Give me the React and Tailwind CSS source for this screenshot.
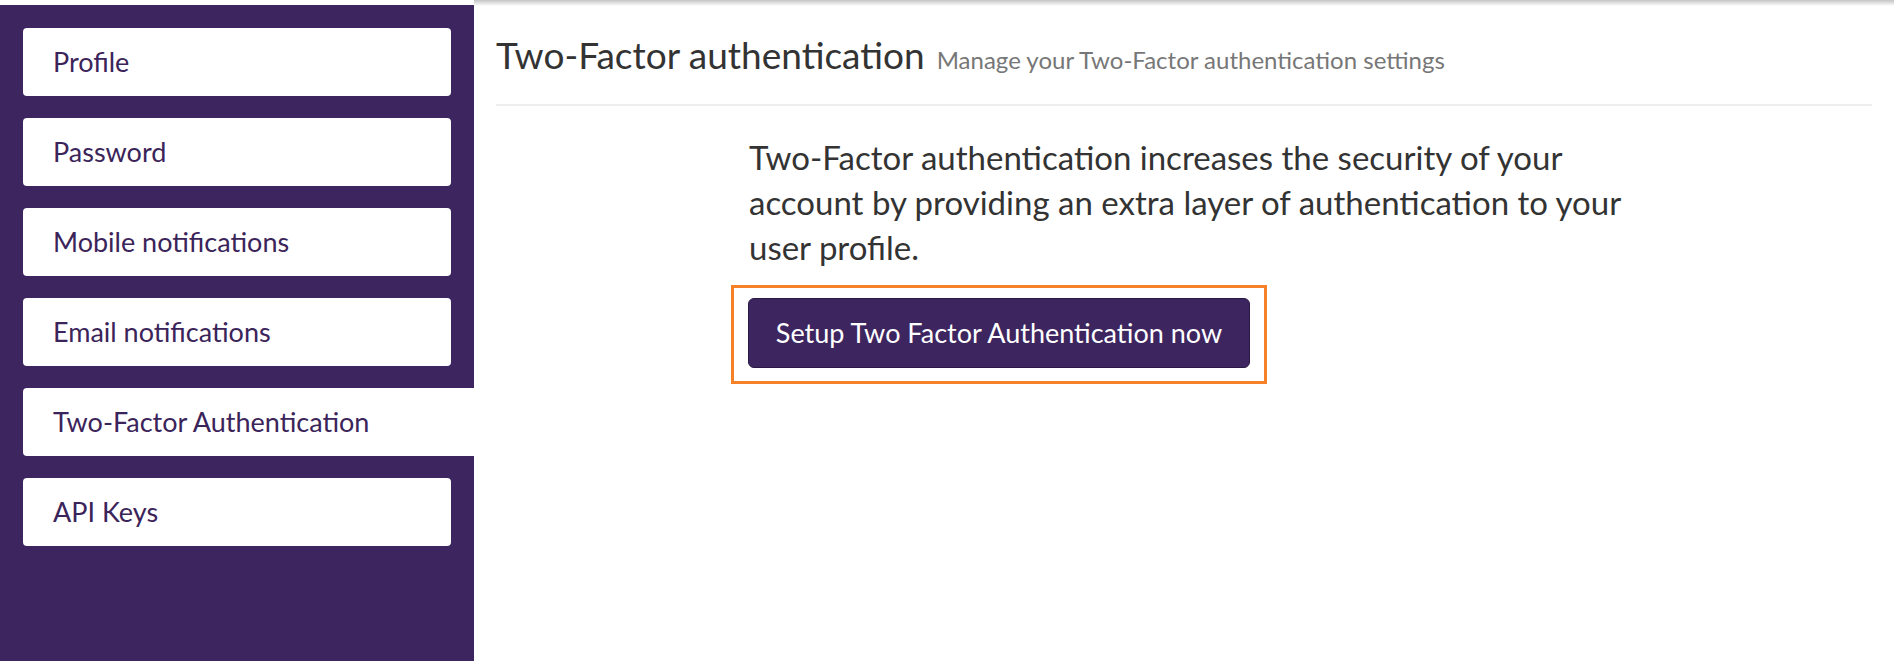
import { useState } from "react";

const menuItems = [
  "Profile",
  "Password",
  "Mobile notifications",
  "Email notifications",
  "Two-Factor Authentication",
  "API Keys",
];

const SideMenu = ({ active, onSelect }) => {
  return (
    <aside className="w-[474px] shrink-0 flex flex-col">
      {/* white strip above the purple column */}
      <div className="h-[5px] bg-white" />
      <nav className="flex-1 bg-[#3d2560] pt-[23px] pl-[23px] flex flex-col gap-[22px]">
        {menuItems.map((item) => {
          const isActive = item === active;
          return (
            <button
              key={item}
              onClick={() => onSelect(item)}
              className={`h-[68px] bg-white text-left pl-[30px] text-[27px] text-[#3b2459] ${
                isActive ? "w-full rounded-l-[4px]" : "w-[428px] rounded-[4px]"
              }`}
            >
              {item}
            </button>
          );
        })}
      </nav>
    </aside>
  );
};

const App = () => {
  const [active, setActive] = useState("Two-Factor Authentication");

  return (
    <div className="flex h-[661px] bg-white font-['Lato','Open_Sans',sans-serif]">
      <SideMenu active={active} onSelect={setActive} />

      <main className="flex-1 flex flex-col">
        {/* header shadow */}
        <div className="h-[6px] bg-gradient-to-b from-[#c4c4c4] to-white" />

        <div className="px-[22px]">
          <div className="pt-[27px] pb-[28px] border-b-2 border-[#eeeeee]">
            <h1 className="flex items-baseline gap-[12px] h-[43px] text-[#333333]">
              <span className="text-[37px] leading-[43px]">Two-Factor authentication</span>
              <small className="text-[24px] leading-none text-[#777777]">
                Manage your Two-Factor authentication settings
              </small>
            </h1>
          </div>

          <div className="ml-[253px] w-[900px] pt-[29px]">
            <p className="text-[33px] leading-[45px] text-[#333333]">
              Two-Factor authentication increases the security of your account by
              providing an extra layer of authentication to your user profile.
            </p>

            <div className="mt-[15px] -ml-[18px] w-fit border-[3px] border-[#f58229] pt-[10px] pb-[13px] px-[14px]">
              <button className="h-[70px] w-[502px] rounded-[6px] border border-[#2a1845] bg-[#3d2560] text-[27px] text-white">
                Setup Two Factor Authentication now
              </button>
            </div>
          </div>
        </div>
      </main>
    </div>
  );
};

export default App;
